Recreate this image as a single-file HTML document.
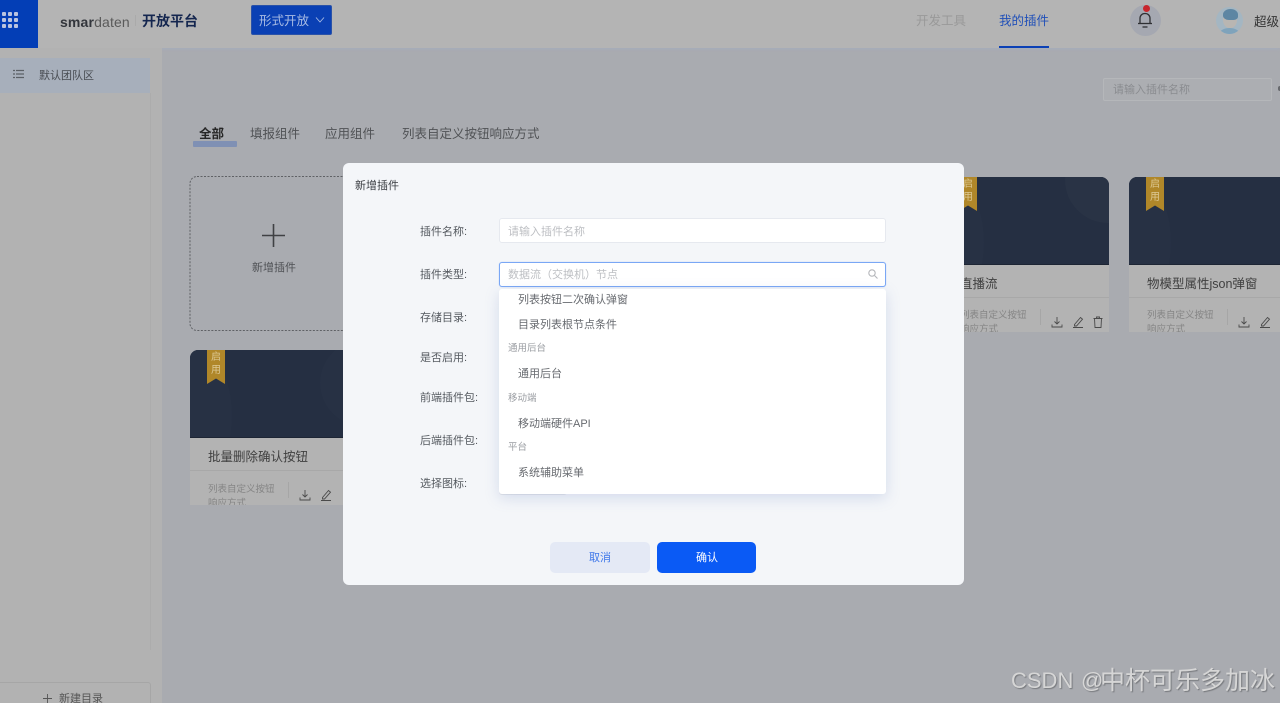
<!DOCTYPE html>
<html lang="zh">
<head>
<meta charset="utf-8">
<title>开放平台</title>
<style>
html,body{margin:0;padding:0;width:1280px;height:703px;overflow:hidden;background:#a9abb0;}
body{position:relative;font-family:"Liberation Sans","Noto Sans CJK SC",sans-serif;}
div,span,svg{position:absolute;box-sizing:border-box;}
b,i{position:static;}
.t{white-space:nowrap;line-height:20px;height:20px;margin-top:2px;}
.card{background:#b3b3b3;overflow:hidden;width:167px;border-radius:8px 8px 0 0;}
.img{left:0;top:0;width:100%;height:88px;background:#252f42;overflow:hidden;border-bottom:1px solid #1d2534;}
.c1{width:86px;height:86px;border-radius:50%;background:#293345;right:-42px;top:-40px;}
.c2{width:120px;height:170px;border-radius:50%;background:#273144;left:-78px;top:-20px;}
.badge{left:17px;top:0;width:18px;height:34px;background:#b08729;clip-path:polygon(0 0,100% 0,100% 100%,50% 84%,0 100%);color:#dcc894;font-size:10px;}
.badge span{left:4px;line-height:12px;}
.title{left:18px;top:95px;font-size:12.5px;color:#3f3f3f;}
.div{left:0;right:0;top:120px;height:1px;background:#a8a8a8;}
.desc{left:18px;font-size:9.5px;color:#858585;}
.vd{left:98px;top:132px;width:1px;height:16px;background:#a6a6a6;}
.lab{left:420px;font-size:11px;color:#555a60;}
.it{left:518px;font-size:11px;color:#676a6f;}
.gr{left:508px;font-size:9.5px;color:#9a9da2;}
.ic{width:14px;height:14px;fill:none;stroke:#4a4a4a;stroke-width:.9;}
</style>
</head>
<body>

<!-- header -->
<div style="left:0;top:0;width:1280px;height:48px;background:#b4b4b4;box-shadow:0 1px 3px #a5adbd;"></div>
<div style="left:0;top:0;width:38px;height:48px;background:#033eb6;"></div>
<svg style="left:0;top:10px;" width="20" height="20" fill="#b9c4df">
<rect x="2" y="2" width="4" height="4" rx="1"/><rect x="8" y="2" width="4" height="4" rx="1"/><rect x="14" y="2" width="4" height="4" rx="1"/>
<rect x="2" y="8" width="4" height="4" rx="1"/><rect x="8" y="8" width="4" height="4" rx="1"/><rect x="14" y="8" width="4" height="4" rx="1"/>
<rect x="2" y="14" width="4" height="4" rx="1"/><rect x="8" y="14" width="4" height="4" rx="1"/><rect x="14" y="14" width="4" height="4" rx="1"/>
</svg>
<div class="t" style="left:60px;top:10px;font-size:14px;letter-spacing:.15px;color:#5a5a5a;"><b style="color:#33363c;">smar</b>daten</div>
<div style="left:135px;top:15px;width:1px;height:11px;background:#aaa;"></div>
<div class="t" style="left:142px;top:9px;font-size:14px;font-weight:bold;color:#14264f;">开放平台</div>
<div style="left:251px;top:5px;width:81px;height:30px;background:#0a40b4;border-radius:2px;border:1px solid #2a52a8;"></div>
<div class="t" style="left:259px;top:9px;font-size:12.5px;color:#a9bce4;">形式开放</div>
<svg style="left:314px;top:15px;" width="12" height="10" fill="none" stroke="#a9bce4" stroke-width=".9"><path d="M2 2.500L6 7L10 2.500"/></svg>
<div class="t" style="left:916px;top:9px;font-size:12.500px;color:#999;">开发工具</div>
<div class="t" style="left:999px;top:9px;font-size:12.500px;color:#2150b8;">我的插件</div>
<div style="left:999px;top:46px;width:50px;height:2px;background:#0b40b5;"></div>
<div style="left:1130px;top:5px;width:31px;height:31px;border-radius:50%;background:#a5a8b1;"></div>
<svg style="left:1135px;top:8px;" width="20" height="22" fill="none" stroke="#2f3034" stroke-width="1.300"><path d="M5 15V10.500C5 7.500 7 5.500 10 5.500C13 5.500 15 7.500 15 10.500V15"/><path d="M3 15.500H17"/><path d="M7.500 19H12.500"/></svg>
<div style="left:1143px;top:5px;width:7px;height:7px;border-radius:50%;background:#c8262d;"></div>
<div style="left:1216px;top:7px;width:27px;height:27px;border-radius:50%;background:#a4b6c2;overflow:hidden;">
<div style="left:7px;top:3px;width:14px;height:18px;border-radius:50% 50% 45% 45%;background:#b9b6b2;"></div>
<div style="left:7px;top:2px;width:15px;height:11px;border-radius:50% 50% 30% 40%;background:#5d86a3;"></div>
<div style="left:4px;top:21px;width:19px;height:10px;border-radius:50% 50% 0 0;background:#7fa3bb;"></div>
</div>
<div class="t" style="left:1254px;top:10px;font-size:12.500px;color:#333;">超级管理员</div>

<!-- sidebar -->
<div style="left:0;top:48px;width:162px;height:655px;background:#b2b2b2;"></div>
<div style="left:150px;top:93px;width:1px;height:557px;background:#acacac;"></div>
<div style="left:0;top:58px;width:150px;height:35px;background:#a7afbb;"></div>
<svg style="left:13px;top:69px;" width="11" height="11" stroke="#5b6066" stroke-width="1.200"><path d="M0 1.500H2M3 1.500H11M0 5H2M3 5H11M0 8.500H2M3 8.500H11"/></svg>
<div class="t" style="left:39px;top:64px;font-size:11px;color:#484c52;">默认团队区</div>
<div style="left:-4px;top:682px;width:155px;height:30px;border:1px solid #a6a6a6;border-radius:3px;"></div>
<svg style="left:43px;top:694px;" width="9" height="9" stroke="#555" stroke-width=".9"><path d="M4.500 0V9M0 4.500H9"/></svg>
<div class="t" style="left:59px;top:687px;font-size:11px;color:#555;">新建目录</div>

<!-- search -->
<div style="left:1103px;top:78px;width:169px;height:23px;background:#acaeb2;border:1px solid #b5b7ba;border-radius:2px;"></div>
<div class="t" style="left:1113px;top:78px;font-size:11px;color:#8a8c90;">请输入插件名称</div>
<div style="left:1278px;top:86px;width:4px;height:5px;border-radius:2px;background:#66686c;"></div>

<!-- tabs -->
<div class="t" style="left:199px;top:122px;font-size:12.500px;font-weight:bold;color:#262626;">全部</div>
<div style="left:193px;top:141px;width:44px;height:6px;background:#7f90b4;border-radius:1px;"></div>
<div class="t" style="left:250px;top:122px;font-size:12.500px;color:#505255;">填报组件</div>
<div class="t" style="left:325px;top:122px;font-size:12.500px;color:#505255;">应用组件</div>
<div class="t" style="left:402px;top:122px;font-size:12.500px;color:#505255;">列表自定义按钮响应方式</div>

<!-- add card -->
<svg style="left:189px;top:176px;" width="170" height="157" fill="none"><rect x="1" y=".5" width="167" height="154" rx="7" stroke="#5f6165" stroke-width="1" stroke-dasharray="2 1.500"/></svg>
<svg style="left:262px;top:224px;" width="23" height="23" stroke="#404144" stroke-width="1.600"><path d="M11.500 0V23M0 11.500H23"/></svg>
<div class="t" style="left:252px;top:256px;font-size:11px;color:#4f5155;">新增插件</div>

<!-- bottom-left card -->
<div class="card" style="left:190px;top:350px;height:155px;">
  <div class="img"><div class="c2"></div><div class="c1" style="left:130px;right:auto;top:-10px;background:#273144;"></div></div>
  <div class="badge"><span style="top:2px;">启</span><span style="top:15px;">用</span></div>
  <div class="t title">批量删除确认按钮</div>
  <div class="div"></div>
  <div class="t desc" style="top:128px;">列表自定义按钮</div>
  <div class="t desc" style="top:142px;">响应方式</div>
  <div class="vd"></div>
  <svg class="ic" style="left:108px;top:138px;" viewBox="0 0 14 14"><path d="M7 2V9M4.500 6.500L7 9L9.500 6.500M2 9.500V12H12V9.500"/></svg>
  <svg class="ic" style="left:129px;top:138px;" viewBox="0 0 14 14"><path d="M3.500 9.500L9.500 2.500L11.500 4.200L5.500 11H3.500ZM2 12.500H12"/></svg>
</div>

<!-- top card 4 -->
<div class="card" style="left:942px;top:177px;height:155px;">
  <div class="img"><div class="c2"></div><div class="c1"></div></div>
  <div class="badge"><span style="top:2px;">启</span><span style="top:15px;">用</span></div>
  <div class="t title">直播流</div>
  <div class="div"></div>
  <div class="t desc" style="top:127px;">列表自定义按钮</div>
  <div class="t desc" style="top:141px;">响应方式</div>
  <div class="vd"></div>
  <svg class="ic" style="left:108px;top:138px;" viewBox="0 0 14 14"><path d="M7 2V9M4.500 6.500L7 9L9.500 6.500M2 9.500V12H12V9.500"/></svg>
  <svg class="ic" style="left:129px;top:138px;" viewBox="0 0 14 14"><path d="M3.500 9.500L9.500 2.500L11.500 4.200L5.500 11H3.500ZM2 12.500H12"/></svg>
  <svg class="ic" style="left:149px;top:138px;" viewBox="0 0 14 14"><path d="M2.500 3.500H11.500M5.500 3.500V2H8.500V3.500M3.500 3.500L4 12.500H10L10.500 3.500"/></svg>
</div>

<!-- top card 5 -->
<div class="card" style="left:1129px;top:177px;height:155px;">
  <div class="img"><div class="c2"></div><div class="c1" style="right:-82px;"></div></div>
  <div class="badge"><span style="top:2px;">启</span><span style="top:15px;">用</span></div>
  <div class="t title">物模型属性json弹窗</div>
  <div class="div"></div>
  <div class="t desc" style="top:127px;">列表自定义按钮</div>
  <div class="t desc" style="top:141px;">响应方式</div>
  <div class="vd"></div>
  <svg class="ic" style="left:108px;top:138px;" viewBox="0 0 14 14"><path d="M7 2V9M4.500 6.500L7 9L9.500 6.500M2 9.500V12H12V9.500"/></svg>
  <svg class="ic" style="left:129px;top:138px;" viewBox="0 0 14 14"><path d="M3.500 9.500L9.500 2.500L11.500 4.200L5.500 11H3.500ZM2 12.500H12"/></svg>
</div>

<!-- modal -->
<div style="left:343px;top:163px;width:621px;height:422px;background:#f4f6f9;border-radius:6px;"></div>
<div class="t" style="left:355px;top:174px;font-size:11px;color:#3a3d42;">新增插件</div>
<div class="t lab" style="top:220px;">插件名称:</div>
<div class="t lab" style="top:263px;">插件类型:</div>
<div class="t lab" style="top:306px;">存储目录:</div>
<div class="t lab" style="top:346px;">是否启用:</div>
<div class="t lab" style="top:386px;">前端插件包:</div>
<div class="t lab" style="top:429px;">后端插件包:</div>
<div class="t lab" style="top:472px;">选择图标:</div>

<div style="left:499px;top:218px;width:387px;height:25px;background:#fff;border:1px solid #e6e9ef;border-radius:3px;"></div>
<div class="t" style="left:508px;top:220px;font-size:11px;color:#bdbfc3;">请输入插件名称</div>
<div style="left:499px;top:262px;width:387px;height:25px;background:#fff;border:1.500px solid #7aa7f5;border-radius:3px;box-shadow:0 0 1px #a9c5f7;"></div>
<div class="t" style="left:508px;top:263px;font-size:11px;color:#bdbfc3;">数据流（交换机）节点</div>
<svg style="left:867px;top:268px;" width="12" height="12" fill="none" stroke="#b4b6ba" stroke-width="1.100"><circle cx="5" cy="5" r="3.200"/><path d="M7.500 7.500L10.500 10.500"/></svg>

<!-- behind dropdown -->
<div style="left:499px;top:480px;width:68px;height:15px;background:#e2e4e8;border-radius:3px;"></div>
<div style="left:884px;top:307px;width:2px;height:21px;background:#e6e8ed;"></div>

<!-- dropdown -->
<div style="left:499px;top:289px;width:387px;height:205px;background:#fff;border-radius:3px;box-shadow:0 4px 14px rgba(130,150,200,.28);"></div>
<div class="t it" style="top:288px;">列表按钮二次确认弹窗</div>
<div class="t it" style="top:313px;">目录列表根节点条件</div>
<div class="t gr" style="top:337px;">通用后台</div>
<div class="t it" style="top:362px;">通用后台</div>
<div class="t gr" style="top:387px;">移动端</div>
<div class="t it" style="top:412px;">移动端硬件API</div>
<div class="t gr" style="top:436px;">平台</div>
<div class="t it" style="top:461px;">系统辅助菜单</div>

<!-- buttons -->
<div style="left:550px;top:542px;width:100px;height:31px;background:#e4e9f5;border-radius:5px;"></div>
<div class="t" style="left:589px;top:546px;font-size:11px;color:#3f78ea;">取消</div>
<div style="left:657px;top:542px;width:99px;height:31px;background:#0a5af5;border-radius:5px;"></div>
<div class="t" style="left:696px;top:546px;font-size:11px;color:#fff;">确认</div>

<!-- watermark -->
<div class="t" style="left:1011px;top:664px;height:30px;line-height:30px;font-size:22px;color:#d6d6d6;text-shadow:1px 1px 1px #77797d;">CSDN</div>
<div class="t" style="left:1081px;top:664px;height:30px;line-height:30px;font-size:22px;color:#d6d6d6;text-shadow:1px 1px 1px #77797d;">@</div>
<div class="t" style="left:1100px;top:664px;height:30px;line-height:30px;font-size:25px;color:#d6d6d6;text-shadow:1px 1px 1px #77797d;">中杯可乐多加冰</div>

</body>
</html>
